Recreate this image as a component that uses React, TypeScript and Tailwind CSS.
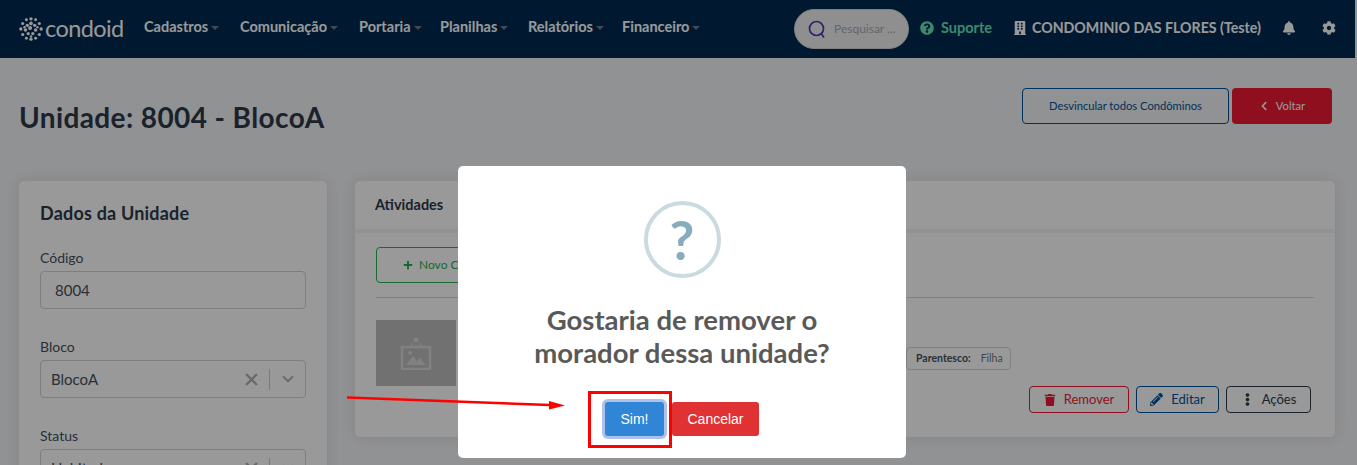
import React from "react";
import { FaQuestionCircle, FaBuilding, FaBell, FaCog, FaChevronLeft, FaPlus, FaTrash, FaPencilAlt, FaEllipsisV } from "react-icons/fa";
import { X, ChevronDown } from "lucide-react";

const font = { fontFamily: '"Lato", "Inter", sans-serif' };

function NavItem({ label, w }: { label: string; w: string }) {
  return (
    <div className={`mb-[4px] flex items-center gap-[3px] ${w}`}>
      <span className="text-[14.5px] font-bold text-white">{label}</span>
      <span className="mt-[2px] h-0 w-0 border-x-[4px] border-t-[4px] border-x-transparent border-t-[#6b7b8c]" />
    </div>
  );
}

function Logo() {
  const dots = [
    [13, 2, 1.8], [18, 3, 1.6], [8, 3, 1.6], [22, 7, 1.7], [4, 7, 1.7], [24, 13, 1.8], [2, 13, 1.8], [22, 19, 1.7], [4, 19, 1.7], [18, 23, 1.6], [8, 23, 1.6], [13, 24, 1.8],
    [13, 7, 2], [9, 9, 1.8], [17, 9, 1.8], [7, 14, 1.9], [12, 12, 2.2], [18, 14, 1.9], [10, 18, 1.8], [15, 18, 1.8], [20, 11, 1.3], [6, 11, 1.3], [13, 21, 1.3],
  ];
  return (
    <div className="flex items-center gap-[2px]">
      <svg width="24" height="24" viewBox="0 0 26 26" className="text-white" fill="currentColor">
        {dots.map(([x, y, r], i) => <circle key={i} cx={x} cy={y} r={r} />)}
      </svg>
      <span className="text-[23.5px] font-normal leading-none tracking-[-0.6px] text-white" style={{ fontFamily: '"Lato", sans-serif' }}>condoid</span>
    </div>
  );
}

function Field({ label, children }: { label: string; children: React.ReactNode }) {
  return (
    <div className="mb-[26px]">
      <div className="h-[25px] pt-[2px] text-[14px] leading-[20px] text-[#46505c]">{label}</div>
      {children}
    </div>
  );
}

function Select({ value }: { value: string }) {
  return (
    <div className="flex h-[38px] items-center rounded-[4px] border border-[#cfd3d8] pl-[10px] pr-[8px]">
      <span className="flex-1 text-[15px] text-[#46505c]">{value}</span>
      <X size={19} strokeWidth={3} className="mr-[8px] text-[#b0b0b0]" />
      <span className="mr-[9px] h-[21px] w-px bg-[#cccccc]" />
      <ChevronDown size={18} strokeWidth={2.5} className="text-[#b5b5b5]" />
    </div>
  );
}

function OutlineButton({ className, icon, label }: { className: string; icon: React.ReactNode; label: string }) {
  return (
    <div className={`flex h-[27px] items-center justify-center gap-[8px] rounded-[4px] border text-[13px] ${className}`}>
      {icon}
      <span>{label}</span>
    </div>
  );
}

function PictureIcon() {
  return (
    <svg width="32" height="34" viewBox="0 0 32 34" fill="none" className="text-[#f2f2f2] opacity-50">
      <circle cx="16" cy="4" r="2.5" fill="currentColor" />
      <path d="M13 7l-4 5M19 7l4 5" stroke="currentColor" strokeWidth="1.5" />
      <rect x="2" y="11" width="28" height="22" stroke="currentColor" strokeWidth="2.5" />
      <path d="M6 29l7-9 4 5 3-3 6 7z" fill="currentColor" />
      <circle cx="10" cy="17" r="2" fill="currentColor" />
    </svg>
  );
}

export default function App() {
  return (
    <div className="relative h-[465px] w-[1357px] overflow-hidden bg-[#f2f3f5]" style={font}>
      {/* page */}
      <header className="flex h-[58px] w-[1355px] items-center bg-[#002b52] pl-[19px]">
        <div className="w-[125px]"><Logo /></div>
        <NavItem label="Cadastros" w="w-[96px]" />
        <NavItem label="Comunicação" w="w-[119px]" />
        <NavItem label="Portaria" w="w-[81px]" />
        <NavItem label="Planilhas" w="w-[88px]" />
        <NavItem label="Relatórios" w="w-[94px]" />
        <NavItem label="Financeiro" w="w-[172px]" />
        <div className="flex h-[40px] w-[115px] items-center gap-[8px] rounded-[20px] border border-[#d4d4d4] bg-[#efefef] pl-[13px]">
          <svg width="18" height="19" viewBox="0 0 18 19" fill="none" stroke="#4c3bb5" strokeWidth="1.7"><circle cx="8.5" cy="8.5" r="7" /><path d="M13.5 14l2.5 3.5" /></svg>
          <span className="whitespace-nowrap text-[12px] text-[#a8a8b4]">Pesquisar ...</span>
        </div>
        <div className="mb-[2px] ml-[11px] flex w-[93px] items-center gap-[7px] text-[#69e3b4]">
          <FaQuestionCircle size={14} />
          <span className="text-[14.5px] font-bold">Suporte</span>
        </div>
        <div className="mb-[2px] flex w-[269px] items-center gap-[5px] text-white">
          <FaBuilding size={14} />
          <span className="whitespace-nowrap text-[14.2px] font-bold">CONDOMINIO DAS FLORES (Teste)</span>
        </div>
        <FaBell size={14} className="mb-[2px] text-white" />
        <FaCog size={14} className="mb-[2px] ml-[26px] text-white" />
      </header>

      <section className="flex items-start justify-between pl-[19px] pr-[25px] pt-[30px]">
        <h1 className="mt-[11px] text-[28px] font-bold leading-[36px] tracking-[0.4px] text-[#2d3a4a]">Unidade: 8004 - BlocoA</h1>
        <div className="flex gap-[3px]">
          <div className="flex h-[36px] w-[207px] items-center justify-center rounded-[4px] border border-[#005299] text-[11.2px] text-[#005299]">Desvincular todos Condôminos</div>
          <div className="flex h-[36px] w-[100px] items-center justify-center gap-[7px] rounded-[4px] bg-[#ee1a33] text-[11.2px] text-white">
            <FaChevronLeft size={10} />
            <span>Voltar</span>
          </div>
        </div>
      </section>

      <main className="mt-[46px] flex items-start gap-[28px] pl-[19px]">
        <div className="h-[320px] w-[308px] rounded-[5px] bg-white px-[21px] pt-[21px] shadow-[0_0_14px_rgba(0,0,0,0.1)]">
          <h2 className="mb-[22px] h-[22px] text-[18px] font-bold leading-[22px] tracking-[0.2px] text-[#2d3a4a]">Dados da Unidade</h2>
          <Field label="Código">
            <div className="flex h-[38px] items-center rounded-[4px] border border-[#cfd3d8] pl-[14px] text-[15px] text-[#46505c]">8004</div>
          </Field>
          <Field label="Bloco"><Select value="BlocoA" /></Field>
          <Field label="Status"><Select value="Habitado" /></Field>
        </div>

        <div className="h-[256px] w-[980px] rounded-[5px] bg-white shadow-[0_0_14px_rgba(0,0,0,0.1)]">
          <div className="flex h-[52px] items-center border-b-4 border-[#f3f4f6] pl-[20px] text-[14.5px] font-bold text-[#2d3a4a]">Atividades</div>
          <div className="px-[21px] pt-[14px]">
            <div className="flex h-[36px] w-[170px] items-center gap-[6px] rounded-[4px] border border-[#28b14c] pl-[26px] text-[12px] text-[#28b14c]">
              <FaPlus size={10} />
              <span className="whitespace-nowrap font-normal">Novo Condômino</span>
            </div>
            <div className="mt-[14px] h-px bg-[#d9d9d9]" />
            <div className="mt-[22px] flex">
              <div className="flex h-[66px] w-[80px] items-center justify-center bg-[#bcbcbc]"><PictureIcon /></div>
              <div className="flex-1">
                <div className="ml-[450px] mt-[27px] flex h-[23px] w-[105px] items-center gap-[10px] rounded-[4px] border border-[#d5d5d5] pl-[9px] text-[10.5px]">
                  <span className="font-bold text-[#46505c]">Parentesco:</span>
                  <span className="text-[#6f7780]">Filha</span>
                </div>
                <div className="mr-[3px] mt-[16px] flex justify-end gap-[7px]">
                  <OutlineButton className="w-[100px] border-[#ee1a33] text-[#ee1a33]" icon={<FaTrash size={12} />} label="Remover" />
                  <OutlineButton className="w-[83px] border-[#005299] text-[#005299]" icon={<FaPencilAlt size={13} />} label="Editar" />
                  <OutlineButton className="w-[85px] border-[#2d3a4a] text-[#2d3a4a]" icon={<FaEllipsisV size={13} />} label="Ações" />
                </div>
              </div>
            </div>
          </div>
        </div>
      </main>

      {/* backdrop */}
      <div className="absolute inset-0 bg-black/40" />

      {/* dialog */}
      <div className="absolute left-[458px] top-[166px] flex h-[292px] w-[448px] flex-col items-center rounded-[5px] bg-white pt-[35px]">
        <div className="flex h-[77px] w-[77px] items-center justify-center rounded-full border-[4px] border-[#c9dae1] text-[54px] font-bold leading-none text-[#87adbd]" style={{ fontFamily: '"Lato", sans-serif' }}>?</div>
        <h2 className="mt-[25px] w-[320px] text-center text-[27.5px] font-bold leading-[33px] text-[#595959]">Gostaria de remover o morador dessa unidade?</h2>
        <div className="mt-[33px] flex gap-[8px] text-[14px]" style={{ fontFamily: '"Liberation Sans", sans-serif' }}>
          <button className="h-[34px] w-[59px] rounded-[3px] bg-[#3085d6] text-white shadow-[0_0_0_3px_rgba(50,100,200,0.4)]">Sim!</button>
          <button className="h-[34px] w-[87px] rounded-[3px] bg-[#e03232] text-white">Cancelar</button>
        </div>
      </div>

      {/* annotation */}
      <div className="absolute left-[588px] top-[391px] h-[57px] w-[84px] border-[3px] border-[#ff0000]" />
      <svg className="absolute left-[340px] top-[390px]" width="235" height="25" viewBox="0 0 235 25" fill="#ff0000">
        <path d="M7 7.5L210 15" stroke="#ff0000" strokeWidth="2.5" />
        <path d="M209 11L225 15.5L209 19.5z" />
      </svg>
    </div>
  );
}
